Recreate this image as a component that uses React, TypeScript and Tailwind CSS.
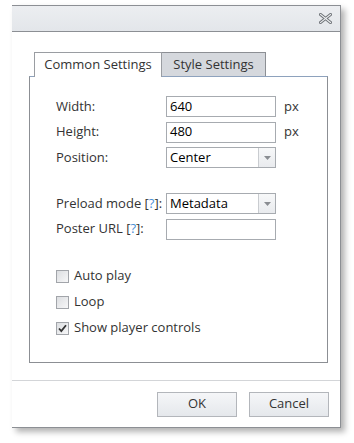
import React from 'react';

const font = { fontFamily: '"Open Sans", "Noto Sans", sans-serif' };

function TextBox({ value }: { value?: string }) {
  return (
    <div className="flex h-[21px] w-[110px] items-center border border-[#a7abb0] bg-white px-[3px] text-[13px] text-black">
      {value}
    </div>
  );
}

function Select({ value }: { value: string }) {
  return (
    <div className="flex h-[21px] w-[110px] items-stretch border border-[#a7abb0] bg-white text-[13px] text-black">
      <div className="flex flex-1 items-center px-[3px]">{value}</div>
      <div className="flex w-[17px] items-center justify-center border-l border-[#c9ccd0] bg-gradient-to-b from-[#f7f8f9] to-[#e9ebee]">
        <svg width="7" height="4" viewBox="0 0 7 4">
          <path d="M0 0h7L3.5 4z" fill="#8a8d92" />
        </svg>
      </div>
    </div>
  );
}

function Row({ label, children, unit }: { label: React.ReactNode; children: React.ReactNode; unit?: boolean }) {
  return (
    <div className="flex h-[21px] items-center">
      <div className="w-[110px] text-[13px] text-[#333]">{label}</div>
      {children}
      {unit && <span className="ml-[8px] text-[13px] text-[#333]">px</span>}
    </div>
  );
}

function Check({ label, checked }: { label: string; checked?: boolean }) {
  return (
    <div className="flex h-[13px] items-center gap-[5px]">
      <div className="flex h-[13px] w-[13px] items-center justify-center border border-[#a2a5aa] bg-gradient-to-br from-[#dcdee1] to-[#f7f7f8]">
        {checked && (
          <svg width="9" height="9" viewBox="0 0 9 9">
            <path d="M1 4.5l2.3 2.6L8 1.2" fill="none" stroke="#333" strokeWidth="1.8" />
          </svg>
        )}
      </div>
      <span className="text-[13px] text-[#333]">{label}</span>
    </div>
  );
}

const Help = () => (
  <>
    [<span className="text-[#4b8fd6]">?</span>]
  </>
);

export default function App() {
  return (
    <div className="h-[443px] w-[354px] overflow-hidden bg-white pt-[5px]" style={font}>
      <div className="ml-[12px] flex h-[423px] w-[329px] flex-col border-b border-r border-t border-[#8c8f94] bg-white shadow-[4px_4px_6px_rgba(0,0,0,0.3)]">
        <div className="flex h-[26px] items-center justify-end border-b border-[#8c8f94] bg-gradient-to-b from-[#eceef1] to-[#e3e6ea] pr-[8px]">
          <svg width="13" height="11" viewBox="0 0 13 11">
            <path d="M1.5 1.5l10 8M11.5 1.5l-10 8" stroke="#6f7378" strokeWidth="3" strokeLinecap="square" />
            <path d="M1.5 1.5l10 8M11.5 1.5l-10 8" stroke="#eef0f2" strokeWidth="1.1" strokeLinecap="square" />
          </svg>
        </div>
        <div className="flex-1 px-[17px] pt-[20px]">
          <div className="ml-[5px] flex h-[24px] items-stretch">
            <div className="relative z-10 -mb-px flex w-[128px] items-center justify-center border border-b-0 border-[#9a9da2] bg-white text-[13px] text-[#333]">
              Common Settings
            </div>
            <div className="flex w-[104px] items-center justify-center border border-l-0 border-b-0 border-[#8c8f94] bg-[#d5d8dd] text-[13px] text-[#333]">
              Style Settings
            </div>
          </div>
          <div className="h-[287px] w-[299px] border border-[#8c8f94] border-t-[#8ea2bd] pl-[26px] pt-[19px]">
            <div className="flex flex-col gap-[4.5px]">
              <Row label="Width:" unit>
                <TextBox value="640" />
              </Row>
              <Row label="Height:" unit>
                <TextBox value="480" />
              </Row>
              <Row label="Position:">
                <Select value="Center" />
              </Row>
              <div className="h-[16px]" />
              <Row label={<>Preload mode <Help />:</>}>
                <Select value="Metadata" />
              </Row>
              <Row label={<>Poster URL <Help />:</>}>
                <TextBox />
              </Row>
            </div>
            <div className="mt-[30px] flex flex-col gap-[13px]">
              <Check label="Auto play" />
              <Check label="Loop" />
              <Check label="Show player controls" checked />
            </div>
          </div>
        </div>
        <div className="flex h-[47px] items-center justify-end gap-[12px] border-t border-[#d3d5d8] pr-[11px]">
          <button className="h-[25px] w-[80px] border border-[#b3b6bb] bg-gradient-to-b from-[#f5f6f8] to-[#e5e8ec] text-[13px] text-[#333]">
            OK
          </button>
          <button className="h-[25px] w-[80px] border border-[#b3b6bb] bg-gradient-to-b from-[#f5f6f8] to-[#e5e8ec] text-[13px] text-[#333]">
            Cancel
          </button>
        </div>
      </div>
    </div>
  );
}
